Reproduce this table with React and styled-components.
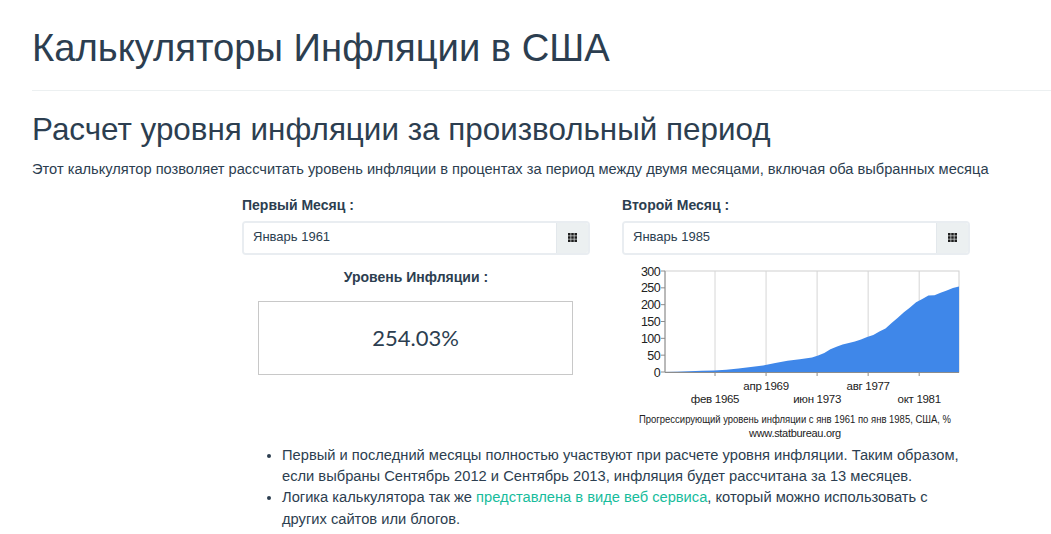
import React from "react";
import styled, { createGlobalStyle } from "styled-components";

const GlobalStyle = createGlobalStyle`
  html, body { margin: 0; padding: 0; background: #fff; }
  body {
    font-family: "Liberation Sans", Arial, sans-serif;
    color: #2c3e50;
    font-size: 15px;
    line-height: 1.43;
    overflow: hidden;
  }
  * { box-sizing: border-box; }
`;

const Page = styled.div`
  padding: 27px 0 0 32px;
`;

const Header = styled.div`
  border-bottom: 1px solid #ecf0f1;
  padding-bottom: 21px;
  margin-bottom: 22px;
`;

const Title = styled.h1`
  margin: 0;
  font-size: 38.2px;
  font-weight: 400;
  line-height: 1.1;
  color: #2c3e50;
`;

const SubTitle = styled.h2`
  margin: 0 0 11px;
  font-size: 31.4px;
  font-weight: 400;
  line-height: 1.1;
  color: #2c3e50;
`;

const Lead = styled.p`
  margin: 0 0 15px;
  font-size: 14.65px;
  line-height: 21px;
  color: #2c3e50;
`;

const Center = styled.div`
  margin-left: 210px;
  width: 728px;
`;

const Columns = styled.div`
  display: grid;
  grid-template-columns: 348px 348px;
  column-gap: 32px;
`;

const Col = styled.div`
  display: flex;
  flex-direction: column;
`;

const Label = styled.div`
  font-weight: 700;
  font-size: 14px;
  line-height: 21px;
  margin-bottom: 5px;
  text-align: ${(p) => (p.$center ? "center" : "left")};
  margin-top: ${(p) => p.$top || 0}px;
`;

const InputGroup = styled.div`
  display: flex;
  height: 34px;
  border: 2px solid #e9edf1;
  border-radius: 4px;
  overflow: hidden;
`;

const Field = styled.div`
  flex: 1;
  display: flex;
  align-items: center;
  padding-left: 9px;
  font-size: 13px;
  color: #2c3e50;
  background: #fff;
`;

const AddonButton = styled.div`
  width: 32px;
  display: flex;
  align-items: center;
  justify-content: center;
  background: #ecf0f1;
  border-left: 1px solid #e3e8ec;
`;

const ResultBox = styled.div`
  margin: 8px 17px 0 16px;
  height: 74px;
  border: 1px solid #c8c8c8;
  display: flex;
  align-items: center;
  justify-content: center;
  font-family: "Lato", "Liberation Sans", sans-serif;
  font-size: 22px;
  color: #2c3e50;
`;

const ChartWrap = styled.div`
  margin-top: 6px;
  height: 182px;
`;

const Notes = styled.ul`
  margin: 2px 0 0;
  padding-left: 40px;
  font-size: 14.7px;
  line-height: 21.4px;
  color: #2c3e50;
`;

const Note = styled.li`
  padding: 0;
`;

const Link = styled.a`
  color: #18bc9c;
  text-decoration: none;
`;

function GridIcon() {
  const cells = [];
  for (let r = 0; r < 3; r++)
    for (let c = 0; c < 3; c++)
      cells.push(<rect key={r + "-" + c} x={c * 3} y={r * 3} width="2.4" height="2.4" fill="#1e1e1e" />);
  return (
    <svg width="9" height="9" viewBox="0 0 8.4 8.4">
      {cells}
    </svg>
  );
}

const cpiPoints = [
  [0, 29.8], [12, 30.0], [24, 30.4], [36, 30.9], [48, 31.2], [60, 31.8],
  [72, 32.9], [84, 34.1], [96, 35.6], [108, 37.8], [120, 39.8], [132, 41.1],
  [144, 42.6], [150, 44.3], [156, 46.6], [162, 49.9], [168, 52.1], [174, 54.2],
  [180, 55.6], [186, 56.8], [192, 58.5], [198, 60.9], [204, 62.5], [210, 65.7],
  [216, 68.3], [222, 73.1], [228, 77.8], [234, 82.7], [240, 87.0], [246, 91.6],
  [252, 94.3], [258, 97.5], [264, 97.8], [270, 99.9], [276, 101.9], [282, 104.1],
  [288, 105.5],
];

function Chart() {
  const X0 = 43, X1 = 337, YT = 10, YB = 111;
  const xs = (m) => X0 + (m * (X1 - X0)) / 288;
  const ys = (v) => YB - (v * (YB - YT)) / 300;
  const pts = cpiPoints.map(([m, c]) => `${xs(m).toFixed(1)},${ys((c / 29.8 - 1) * 100).toFixed(1)}`);
  const area = `M${X0},${YB} L${pts.join(" L")} L${X1},${YB} Z`;
  const grid = [49, 99, 149, 199, 249].map(xs);
  const xl = [
    ["фев 1965", grid[0], 142],
    ["апр 1969", grid[1], 129],
    ["июн 1973", grid[2], 142],
    ["авг 1977", grid[3], 129],
    ["окт 1981", grid[4], 142],
  ];
  const font = "'Liberation Sans', Arial, sans-serif";
  return (
    <svg width="348" height="182" viewBox="0 0 348 182">
      <rect x={X0} y={YT} width={X1 - X0} height={YB - YT} fill="#fff" stroke="#cfcfcf" strokeWidth="1" />
      {grid.map((g, i) => (
        <line key={i} x1={g} y1={YT} x2={g} y2={YB} stroke="#d6d6d6" strokeWidth="1" />
      ))}
      <path d={area} fill="#3f87e9" />
      <line x1={X0} y1={YT} x2={X0} y2={YB} stroke="#8c8c8c" strokeWidth="1" />
      <line x1={X0} y1={YB + 0.5} x2={X1} y2={YB + 0.5} stroke="#8c8c8c" strokeWidth="1" />
      {[0, 50, 100, 150, 200, 250, 300].map((v) => (
        <g key={v}>
          <line x1={X0 - 4} y1={ys(v)} x2={X0} y2={ys(v)} stroke="#8c8c8c" />
          <text x={X0 - 5} y={ys(v) + 4.5} textAnchor="end" fontFamily={font} fontSize="12.5" letterSpacing="-0.6" fill="#222">
            {v}
          </text>
        </g>
      ))}
      {grid.map((g, i) => (
        <line key={"t" + i} x1={g} y1={YB} x2={g} y2={YB + 4} stroke="#8c8c8c" />
      ))}
      {xl.map(([t, x, y]) => (
        <text key={t} x={x} y={y} textAnchor="middle" fontFamily={font} fontSize="11.5" letterSpacing="-0.3" fill="#222">
          {t}
        </text>
      ))}
      <text x="173" y="162" textAnchor="middle" fontFamily={font} fontSize="11" textLength="312" lengthAdjust="spacingAndGlyphs" fill="#222">
        Прогрессирующий уровень инфляции с янв 1961 по янв 1985, США, %
      </text>
      <text x="173" y="176" textAnchor="middle" fontFamily={font} fontSize="11" letterSpacing="-0.3" fill="#222">
        www.statbureau.org
      </text>
    </svg>
  );
}

export default function App() {
  return (
    <>
      <GlobalStyle />
      <Page>
        <Header>
          <Title>Калькуляторы Инфляции в США</Title>
        </Header>
        <SubTitle>Расчет уровня инфляции за произвольный период</SubTitle>
        <Lead>
          Этот калькулятор позволяет рассчитать уровень инфляции в процентах за период между двумя месяцами, включая оба выбранных месяца
        </Lead>
        <Center>
          <Columns>
            <Col>
              <Label>Первый Месяц :</Label>
              <InputGroup>
                <Field>Январь 1961</Field>
                <AddonButton><GridIcon /></AddonButton>
              </InputGroup>
              <Label $center $top={12}>Уровень Инфляции :</Label>
              <ResultBox>254.03%</ResultBox>
            </Col>
            <Col>
              <Label>Второй Месяц :</Label>
              <InputGroup>
                <Field>Январь 1985</Field>
                <AddonButton><GridIcon /></AddonButton>
              </InputGroup>
              <ChartWrap>
                <Chart />
              </ChartWrap>
            </Col>
          </Columns>
          <Notes>
            <Note>
              Первый и последний месяцы полностью участвуют при расчете уровня инфляции. Таким образом, если выбраны Сентябрь 2012 и Сентябрь 2013, инфляция будет рассчитана за 13 месяцев.
            </Note>
            <Note>
              Логика калькулятора так же <Link href="#">представлена в виде веб сервиса</Link>, который можно использовать с других сайтов или блогов.
            </Note>
          </Notes>
        </Center>
      </Page>
    </>
  );
}
